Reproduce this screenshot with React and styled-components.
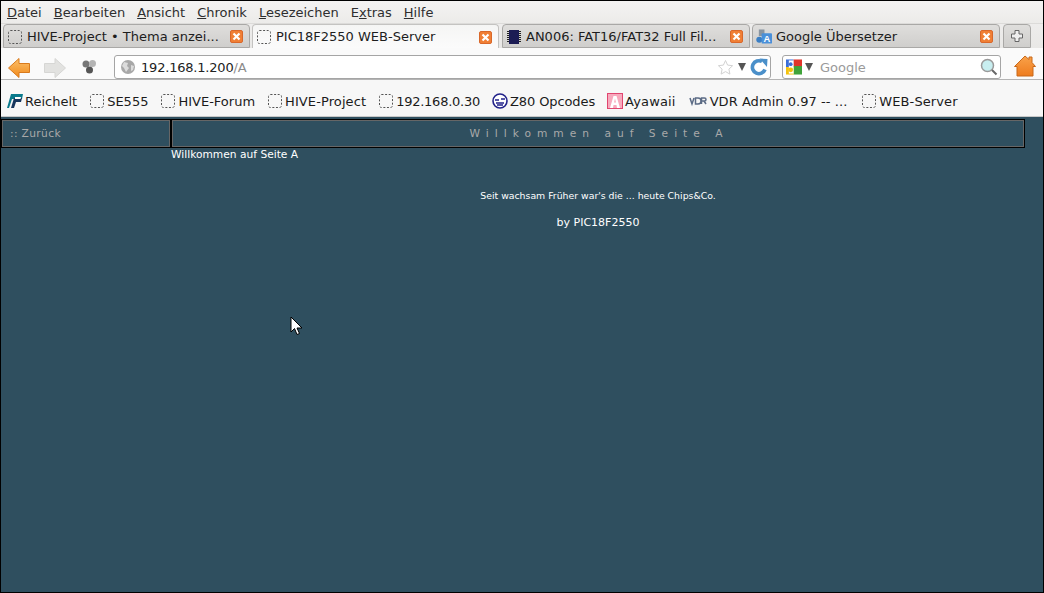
import React from 'react';
import styled, { createGlobalStyle } from 'styled-components';

const Global = createGlobalStyle`
  html, body { margin: 0; padding: 0; height: 100%; background: #000; overflow: hidden; }
  #root { height: 100%; }
`;

const Win = styled.div`
  position: relative;
  width: 1044px;
  height: 593px;
  box-sizing: border-box;
  border: 1px solid #000;
  display: flex;
  flex-direction: column;
  font-family: "DejaVu Sans", sans-serif;
  font-size: 13px;
  color: #111;
  background: #f2f1f0;
  overflow: hidden;
`;

const MenuBar = styled.div`
  height: 23px;
  box-sizing: border-box;
  display: flex;
  align-items: center;
  gap: 12px;
  padding: 1px 0 0 6px;
  background: linear-gradient(#f4f3f2, #ecebe9);
  border-bottom: 1px solid #dcdbd9;
`;

const MenuItem = styled.span`
  line-height: 22px;
  color: #2e2e2e;
`;

const TabStrip = styled.div`
  height: 24px;
  display: flex;
  align-items: flex-end;
  padding-left: 2px;
  background: linear-gradient(#eeedec, #e9e8e6);
  box-sizing: border-box;
`;

const Tab = styled.div`
  box-sizing: border-box;
  width: ${p => p.$w}px;
  margin-right: ${p => p.$mr}px;
  height: 24px;
  display: flex;
  align-items: center;
  padding: 1px 6px 0 3px;
  gap: 4px;
  border: 1px solid ${p => (p.$active ? '#c4c3c1' : '#a9a8a6')};
  border-bottom: ${p => (p.$active ? 'none' : '1px solid #a9a8a6')};
  border-radius: 4px 4px 0 0;
  background: ${p => (p.$active ? 'linear-gradient(#f5f5f4, #fbfbfb)' : 'linear-gradient(#dfdedc, #cfcecc)')};
  white-space: nowrap;
  color: #1d1d1d;
`;

const TabTitle = styled.span`
  flex: 1;
  line-height: 20px;
`;

const NewTab = styled(Tab)`
  justify-content: center;
  padding: 0;
`;

const NavBar = styled.div`
  height: 31px;
  display: flex;
  align-items: flex-start;
  background: #fafafa;
  box-sizing: border-box;
  padding: 7px 0 0 6px;
`;

const NavIcon = styled.span`
  display: flex;
  width: ${p => p.$w}px;
  margin-right: ${p => p.$mr || 0}px;
  margin-top: ${p => p.$mt || 0}px;
  justify-content: center;
`;

const Field = styled.div`
  box-sizing: border-box;
  height: 24px;
  width: ${p => p.$w}px;
  margin-right: ${p => p.$mr || 0}px;
  background: #fff;
  border: 1px solid #a5a5a5;
  border-radius: 3px;
  display: flex;
  align-items: center;
  padding: 0 2px 0 ${p => p.$pl || 5}px;
  gap: ${p => p.$gap || 4}px;
  position: relative;
  z-index: 1;
`;

const UrlText = styled.span`
  flex: 1;
  margin-left: 1px;
  color: #222;
  white-space: nowrap;
  letter-spacing: -0.2px;
`;

const UrlPath = styled.span`
  color: #8b8b8b;
`;

const Placeholder = styled.span`
  flex: 1;
  color: #9a9a9a;
  margin-left: 4px;
`;

const Arrow = styled.span`
  width: 0;
  height: 0;
  border-left: 4px solid transparent;
  border-right: 4px solid transparent;
  border-top: 8px solid #555;
`;

const BookmarkBar = styled.div`
  height: 38px;
  display: flex;
  align-items: center;
  gap: 12px;
  padding: 6px 0 0 6px;
  box-sizing: border-box;
  background: #f7f7f7;
  border-top: 1px solid #b4b4b4;
  border-bottom: 1px solid #c9c9c9;
  white-space: nowrap;
`;

const Bookmark = styled.span`
  display: flex;
  align-items: center;
  gap: ${p => p.$gap ?? 2}px;
  margin-left: ${p => p.$ml || 0}px;
  letter-spacing: ${p => p.$ls || 0}px;
  color: #1b1b1b;
`;

const Page = styled.div`
  flex: 1;
  background: #2f4f5f;
  display: grid;
  grid-template-columns: 170px 854px;
  grid-template-rows: 29px auto;
  padding-top: 2px;
  font-size: 10.67px;
  color: #fff;
  box-sizing: border-box;
`;

const Cell = styled.div`
  box-sizing: border-box;
  border: 1px solid #000;
  outline: 1px solid #666;
  outline-offset: -2px;
  height: 29px;
  line-height: 27px;
  color: #a9a9a9;
  white-space: nowrap;
`;

const BackCell = styled(Cell)`
  padding-left: 8px;
  letter-spacing: 0.35px;
`;

const TitleCell = styled(Cell)`
  text-align: center;
  letter-spacing: 6px;
  padding-left: 2px;
`;

const Content = styled.div`
  grid-column: 2;
`;

const Welcome = styled.div`
  line-height: 13px;
`;

const Footer = styled.div`
  text-align: center;
  margin-top: 28px;
`;

const Motto = styled.div`
  font-size: 9.33px;
  line-height: 14px;
`;

const Author = styled.div`
  font-size: 11px;
  margin-top: 13px;
  line-height: 13px;
`;

const Pointer = styled.svg`
  position: absolute;
  left: 289px;
  top: 315px;
`;

const Blank = () => (
  <svg width="16" height="16" viewBox="0 0 16 16">
    <rect x="1.5" y="1.5" width="13" height="13" rx="2" fill="none" stroke="#555" strokeDasharray="2 1.6" />
  </svg>
);

const Close = () => (
  <svg width="13" height="13" viewBox="0 0 13 13" style={{ flexShrink: 0 }}>
    <rect x="0.5" y="0.5" width="12" height="12" rx="1.5" fill="#f07f35" stroke="#d9682a" />
    <path d="M3.5 3.5l6 6M9.5 3.5l-6 6" stroke="#fff" strokeWidth="2.2" />
  </svg>
);

const Chip = () => (
  <svg width="16" height="16" viewBox="0 0 16 16">
    <rect x="3" y="1" width="10" height="14" fill="#1c1c54" />
    <path d="M1 2.500h2M1 4.500h2M1 6.500h2M1 8.500h2M1 10.500h2M1 12.500h2M13 2.500h2M13 4.500h2M13 6.500h2M13 8.500h2M13 10.500h2M13 12.500h2" stroke="#222" />
  </svg>
);

const Translate = () => (
  <svg width="16" height="16" viewBox="0 0 17 16">
    <path d="M3 0h6v7H3z" fill="#8a95a0" />
    <circle cx="3.500" cy="11" r="3.200" fill="#3b7fc4" />
    <rect x="6" y="4" width="11" height="11" rx="1" fill="#4a90d9" />
    <text x="11.500" y="13.500" fontSize="10" fontWeight="bold" textAnchor="middle" fill="#fff" fontFamily="Liberation Sans">A</text>
  </svg>
);

const Plus = () => (
  <svg width="16" height="16" viewBox="0 0 16 16">
    <path d="M6 2.500h4v3.500h3.500v4H10v3.500H6V10H2.500V6H6z" fill="#eee" stroke="#666" />
  </svg>
);

const NavArrow = ({ fill, stroke, flip }) => (
  <svg width="24" height="22" viewBox="0 0 24 22" style={flip ? { transform: 'scaleX(-1)' } : undefined}>
    <defs>
      <linearGradient id="backGrad" x1="0" y1="0" x2="0" y2="1">
        <stop offset="0" stopColor="#fcc06a" />
        <stop offset="1" stopColor="#f08a1c" />
      </linearGradient>
    </defs>
    <path d="M1.500 11L12 1.500V6.500H22.500V15.500H12V20.500z" fill={fill} stroke={stroke} strokeLinejoin="round" />
  </svg>
);

const History = () => (
  <svg width="16" height="16" viewBox="0 0 16 16">
    <circle cx="5" cy="5" r="3.500" fill="#777" />
    <circle cx="11.500" cy="4.500" r="3.500" fill="#b4b4b4" />
    <circle cx="8.500" cy="11" r="3.500" fill="#555" />
  </svg>
);

const Globe = () => (
  <svg width="16" height="16" viewBox="0 0 16 16">
    <circle cx="8" cy="8" r="7" fill="#a8a8a8" />
    <path d="M4 3l4 1-1 3 2 2-3 4-2-4-2-2zM11 6l3 1-1 4-2 1z" fill="#dcdcdc" />
  </svg>
);

const Star = () => (
  <svg width="17" height="17" viewBox="0 0 17 17">
    <path d="M8.500 1.500l2.100 4.600 5 .6-3.700 3.400 1 5-4.400-2.500-4.400 2.500 1-5L1.400 6.700l5-.6z" fill="#fff" stroke="#d2d2d2" />
  </svg>
);

const Reload = () => (
  <svg width="18" height="18" viewBox="0 0 18 18">
    <path d="M15 11.500A6.500 6.500 0 1 1 12 3.500" fill="none" stroke="#4a8fc9" strokeWidth="3.600" />
    <path d="M9.500 0.500l8 .5-.5 8z" fill="#4a8fc9" />
  </svg>
);

const GoogleG = () => (
  <svg width="16" height="18" viewBox="0 0 17 18">
    <path d="M0 1h8v8H0z" fill="#3b6fd9" />
    <path d="M8 1h9v8H8z" fill="#e0352b" />
    <path d="M8 8h9v9H8z" fill="#3fa33a" />
    <path d="M0 9h8v8H0z" fill="#f4c20d" />
    <path d="M3 2h5v14H3z" fill="#fff" />
    <circle cx="5" cy="6" r="2" fill="#3b6fd9" />
    <circle cx="5" cy="12" r="2.500" fill="#f4c20d" />
  </svg>
);

const Search = () => (
  <svg width="18" height="18" viewBox="0 0 18 18">
    <circle cx="7.500" cy="7.500" r="6" fill="#c8eef0" stroke="#9a9a9a" strokeWidth="1.500" />
    <path d="M12 12l4.500 4.500" stroke="#666" strokeWidth="2" />
  </svg>
);

const Home = () => (
  <svg width="22" height="22" viewBox="0 0 22 22">
    <defs>
      <linearGradient id="homeGrad" x1="0" y1="0" x2="0" y2="1">
        <stop offset="0" stopColor="#f9a24a" />
        <stop offset="1" stopColor="#ee7c1e" />
      </linearGradient>
    </defs>
    <path d="M11 1L15 4.500V2H18V7.500L21.500 11.500H19V21H3V11.500H.5z" fill="url(#homeGrad)" stroke="#c8691b" strokeLinejoin="round" />
  </svg>
);

const Reichelt = () => (
  <svg width="16" height="16" viewBox="0 0 16 16">
    <path d="M4 1h12l-1 5H5L2 15H0z" fill="#0a7a8c" />
    <path d="M7 5h8l-1 4H9l-2 6H4z" fill="#17375e" />
    <path d="M8 4h6l-.5 2H8z" fill="#fff" />
  </svg>
);

const Z80 = () => (
  <svg width="16" height="16" viewBox="0 0 16 16">
    <circle cx="8" cy="8" r="7" fill="#fff" stroke="#22228a" strokeWidth="1.600" />
    <path d="M3 7h4M9 6h4M4 10h8M5 12h6" stroke="#22228a" strokeWidth="1.500" />
  </svg>
);

const Ayawaii = () => (
  <svg width="16" height="16" viewBox="0 0 16 16">
    <rect width="16" height="16" fill="#e0456f" />
    <rect x="1" y="1" width="14" height="14" fill="#f7a9bd" />
    <path d="M3 15L6.500 3h3L13 15h-3l-.5-3h-3L6 15zM7 9.500h2L8 5.500z" fill="#fff" />
  </svg>
);

const Vdr = () => (
  <svg width="18" height="12" viewBox="0 0 18 12">
    <path d="M1 3l2 6 2-6M6.500 3v6h2.500a3 3 0 0 0 0-6zM12.500 9V3h3a1.500 1.500 0 0 1 0 3h-3M15 6l2 3" fill="none" stroke="#5b6b85" strokeWidth="1.500" />
  </svg>
);

const tabs = [
  { icon: <Blank />, title: 'HIVE-Project • Thema anzei...', w: 247, mr: 2 },
  { icon: <Blank />, title: 'PIC18F2550 WEB-Server', w: 247, mr: 3, active: true },
  { icon: <Chip />, title: 'AN006: FAT16/FAT32 Full Fil...', w: 248, mr: 2 },
  { icon: <Translate />, title: 'Google Übersetzer', w: 248, mr: 3 },
];

const bookmarks = [
  { icon: <Reichelt />, label: 'Reichelt' },
  { icon: <Blank />, label: 'SE555' },
  { icon: <Blank />, label: 'HIVE-Forum' },
  { icon: <Blank />, label: 'HIVE-Project', ls: 0.1 },
  { icon: <Blank />, label: '192.168.0.30', ls: -0.25 },
  { icon: <Z80 />, label: 'Z80 Opcodes', ls: -0.1 },
  { icon: <Ayawaii />, label: 'Ayawaii', ls: 0.15 },
  { icon: <Vdr />, label: 'VDR Admin 0.97 -- ...', gap: 3, ls: 0.05, ml: 1 },
  { icon: <Blank />, label: 'WEB-Server', ml: 2, ls: 0.1 },
];

const App = () => (
  <Win>
    <Global />
    <MenuBar>
      <MenuItem><u>D</u>atei</MenuItem>
      <MenuItem><u>B</u>earbeiten</MenuItem>
      <MenuItem><u>A</u>nsicht</MenuItem>
      <MenuItem><u>C</u>hronik</MenuItem>
      <MenuItem><u>L</u>esezeichen</MenuItem>
      <MenuItem>E<u>x</u>tras</MenuItem>
      <MenuItem><u>H</u>ilfe</MenuItem>
    </MenuBar>
    <TabStrip>
      {tabs.map(t => (
        <Tab key={t.title} $active={t.active} $w={t.w} $mr={t.mr}>
          {t.icon}
          <TabTitle>{t.title}</TabTitle>
          <Close />
        </Tab>
      ))}
      <NewTab $w={28} $mr={0}><Plus /></NewTab>
    </TabStrip>
    <NavBar>
      <NavIcon $w={24} $mr={12} $mt={2}><NavArrow fill="url(#backGrad)" stroke="#d97a1c" /></NavIcon>
      <NavIcon $w={24} $mr={12} $mt={2}><NavArrow fill="#e2e2e0" stroke="#d6d6d4" flip /></NavIcon>
      <NavIcon $w={20} $mr={15} $mt={4}><History /></NavIcon>
      <Field $w={657} $mr={11}>
        <Globe />
        <UrlText>192.168.1.200<UrlPath>/A</UrlPath></UrlText>
        <Star />
        <Arrow />
        <Reload />
      </Field>
      <Field $w={219} $mr={13} $gap={3} $pl={3}>
        <GoogleG />
        <Arrow />
        <Placeholder>Google</Placeholder>
        <Search />
      </Field>
      <Home />
    </NavBar>
    <BookmarkBar>
      {bookmarks.map(b => (
        <Bookmark key={b.label} $gap={b.gap} $ls={b.ls} $ml={b.ml}>
          {b.icon}
          {b.label}
        </Bookmark>
      ))}
    </BookmarkBar>
    <Page>
      <BackCell>:: Zurück</BackCell>
      <TitleCell>Willkommen auf Seite A</TitleCell>
      <Content>
        <Welcome>Willkommen auf Seite A</Welcome>
        <Footer>
          <Motto>Seit wachsam Früher war's die ... heute Chips&amp;Co.</Motto>
          <Author>by PIC18F2550</Author>
        </Footer>
      </Content>
    </Page>
    <Pointer width="14" height="20" viewBox="0 0 14 20">
      <path d="M1 1v15l3.500-3.500 2.500 6 2.500-1-2.500-5.500h5z" fill="#fff" stroke="#000" />
    </Pointer>
  </Win>
);

export default App;
